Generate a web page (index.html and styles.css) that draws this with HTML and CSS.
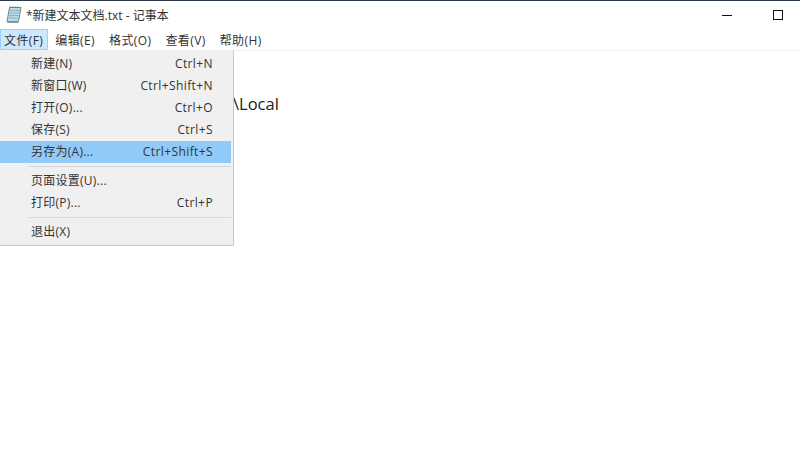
FILE: index.html
```html
<!DOCTYPE html>
<html lang="zh-CN">
<head>
<meta charset="utf-8">
<title>记事本</title>
<link rel="stylesheet" href="styles.css">
</head>
<body>
<div class="window">
  <header class="titlebar">
    <svg class="app-icon" width="18" height="18" viewBox="0 0 18 18">
      <path d="M4.5 1.5H16L13.5 15.5H2Z" fill="#b9dbe6" stroke="#6f8791"/>
      <path d="M5 4.5H14.5M4.5 7H14M4 9.5H13.6M3.6 12H13.2" stroke="#8fb3c0" stroke-width="1"/>
      <path d="M2 15.5H13.5L13.2 17H2.5Z" fill="#8a9ba3"/>
      <path d="M5.5 1.5L5 0.5M8 1.5L7.5 0.5M10.5 1.5L10 0.5M13 1.5L12.5 0.5" stroke="#55666e"/>
    </svg>
    <span class="title">*新建文本文档.txt - 记事本</span>
    <div class="controls">
      <span class="minimize"></span>
      <span class="maximize"></span>
    </div>
  </header>
  <nav class="menubar">
    <span class="menu-item active">文件(F)</span>
    <span class="menu-item">编辑(E)</span>
    <span class="menu-item">格式(O)</span>
    <span class="menu-item">查看(V)</span>
    <span class="menu-item">帮助(H)</span>
  </nav>
  <main class="editor">
    <div class="doc-line">\Local</div>
    <div class="dropdown">
      <div class="row"><span>新建(N)</span><span>Ctrl+N</span></div>
      <div class="row"><span>新窗口(W)</span><span>Ctrl+Shift+N</span></div>
      <div class="row"><span>打开(O)...</span><span>Ctrl+O</span></div>
      <div class="row"><span>保存(S)</span><span>Ctrl+S</span></div>
      <div class="row selected"><span>另存为(A)...</span><span>Ctrl+Shift+S</span></div>
      <div class="separator"></div>
      <div class="row"><span>页面设置(U)...</span></div>
      <div class="row"><span>打印(P)...</span><span>Ctrl+P</span></div>
      <div class="separator"></div>
      <div class="row"><span>退出(X)</span></div>
    </div>
  </main>
</div>
</body>
</html>
```
FILE: styles.css
```css
html, body {
  margin: 0;
  padding: 0;
  background: #fff;
}
.window {
  width: 800px;
  height: 450px;
  display: flex;
  flex-direction: column;
  overflow: hidden;
  font-family: "Open Sans", "Noto Sans CJK SC", sans-serif;
  font-size: 12px;
  color: #222;
  border-top: 1px solid #2b3a4c;
  box-sizing: border-box;
}
.titlebar {
  height: 28px;
  display: flex;
  align-items: center;
  padding-left: 5px;
  gap: 3px;
  flex: none;
}
.app-icon {
  flex: none;
}
.title {
  font-size: 12px;
  color: #333;
}
.controls {
  margin-left: auto;
  display: flex;
  align-items: center;
  gap: 41px;
  padding-right: 17px;
}
.minimize {
  width: 10px;
  height: 1px;
  background: #111;
  margin-top: 1px;
}
.maximize {
  width: 8px;
  height: 8px;
  border: 1px solid #111;
}
.menubar {
  height: 22px;
  flex: none;
  display: flex;
  align-items: stretch;
  border-bottom: 1px solid #f0f0f0;
  box-sizing: border-box;
  letter-spacing: 0.4px;
}
.menu-item {
  display: flex;
  align-items: center;
  padding: 1px 7px 0;
  color: #333;
}
.menu-item.active {
  background: #cce8ff;
  box-shadow: inset 0 0 0 1px #99d1ff;
  padding: 1px 5px 0 4px;
}
.editor {
  flex: 1;
  position: relative;
}
.doc-line {
  position: absolute;
  left: 233px;
  top: 42px;
  font-size: 16.5px;
  line-height: 22px;
  color: #222;
}
.dropdown {
  position: absolute;
  left: 0;
  top: -1px;
  width: 231px;
  padding: 3px 2px 2px 0;
  background: #f0f0f0;
  border-right: 1px solid #c8c8c8;
  border-bottom: 1px solid #c8c8c8;
  letter-spacing: 0.4px;
}
.row {
  height: 22px;
  display: flex;
  align-items: center;
  justify-content: space-between;
  padding: 0 18px 2px 31px;
  box-sizing: border-box;
  color: #333;
}
.row span:first-child {
  letter-spacing: 0.25px;
}
.row.selected {
  background: #91c9f7;
}
.separator {
  height: 1px;
  margin: 3px 0 3px 28px;
  background: #d7d7d7;
}
```
